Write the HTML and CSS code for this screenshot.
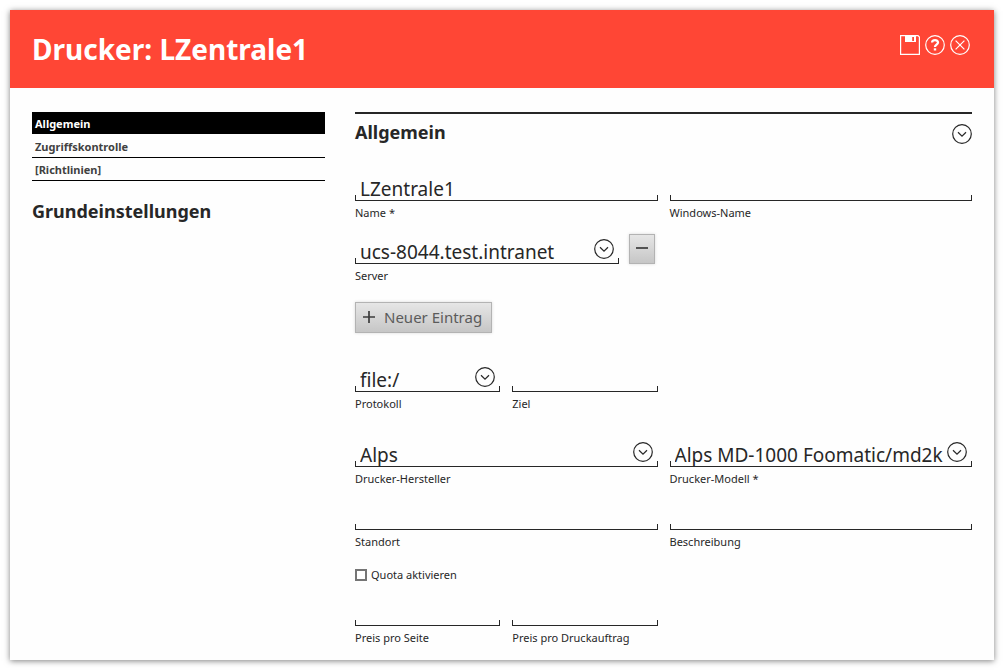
FILE: index.html
```html
<!DOCTYPE html>
<html lang="de">
<head>
<meta charset="utf-8">
<title>Drucker: LZentrale1</title>
<link rel="stylesheet" href="styles.css">
</head>
<body>
<svg class="sprite" aria-hidden="true">
  <symbol id="chevron" viewBox="0 0 20 20"><circle cx="10" cy="10" r="9.3"/><path d="M6 8.2l4 3.9 4-3.9"/></symbol>
</svg>
<div class="window">
  <header class="titlebar">
    <h1 class="title">Drucker: LZentrale1</h1>
    <div class="actions">
      <button class="icon-button" type="button" aria-label="Speichern">
        <svg class="icon" viewBox="0 0 20 20"><path d="M.6.6H18L19.4 2V19.4H.6z"/><path class="solid" fill-rule="evenodd" d="M5 1H16V7H5zM12.2 2V6H14V2z"/></svg>
      </button>
      <button class="icon-button" type="button" aria-label="Hilfe">
        <svg class="icon" viewBox="0 0 20 20"><circle cx="10" cy="10" r="9.3"/><path class="thick" d="M7.1 7.6C7.1 4.4 13 4.3 13 7.5C13 9.6 10 9.7 10 12"/><path class="solid" d="M8.8 13.3h2.4v2.2H8.8z"/></svg>
      </button>
      <button class="icon-button" type="button" aria-label="Schließen">
        <svg class="icon" viewBox="0 0 20 20"><circle cx="10" cy="10" r="9.3"/><path d="M5.6 5.6l8.8 8.8M14.4 5.6l-8.8 8.8"/></svg>
      </button>
    </div>
  </header>
  <div class="content">
    <aside class="sidebar">
      <nav class="tabs">
        <a class="tab active" href="#allgemein">Allgemein</a>
        <a class="tab" href="#zugriff">Zugriffskontrolle</a>
        <a class="tab" href="#richtlinien">[Richtlinien]</a>
      </nav>
      <h2 class="heading">Grundeinstellungen</h2>
    </aside>
    <main class="main" id="allgemein">
      <div class="section-head">
        <h2 class="heading">Allgemein</h2>
        <button class="icon-button" type="button" aria-label="Allgemein einklappen"><svg class="icon"><use href="#chevron"/></svg></button>
      </div>
      <form class="form">
        <div class="row">
          <div class="field half"><input class="control" id="name" type="text" value="LZentrale1"><label class="label" for="name">Name *</label></div>
          <div class="field half"><input class="control" id="winname" type="text"><label class="label" for="winname">Windows-Name</label></div>
        </div>
        <div class="row">
          <div class="server half">
            <div class="field">
              <div class="picker"><select class="control" id="server"><option>ucs-8044.test.intranet</option></select><svg class="icon arrow"><use href="#chevron"/></svg></div>
              <label class="label" for="server">Server</label>
            </div>
            <button class="button remove" type="button" aria-label="Eintrag entfernen"><svg class="glyph" viewBox="0 0 14 14"><path d="M1 7h12"/></svg></button>
          </div>
        </div>
        <div class="add-row">
          <button class="button" type="button"><svg class="glyph" viewBox="0 0 14 14"><path d="M1 7h12M7 1v12"/></svg>Neuer Eintrag</button>
        </div>
        <div class="row spaced">
          <div class="field"><div class="picker"><select class="control" id="protocol"><option>file:/</option></select><svg class="icon arrow"><use href="#chevron"/></svg></div><label class="label" for="protocol">Protokoll</label></div>
          <div class="field"><input class="control" id="target" type="text"><label class="label" for="target">Ziel</label></div>
        </div>
        <div class="row">
          <div class="field half"><div class="picker"><select class="control" id="vendor"><option>Alps</option></select><svg class="icon arrow"><use href="#chevron"/></svg></div><label class="label" for="vendor">Drucker-Hersteller</label></div>
          <div class="field half"><div class="picker"><select class="control" id="model"><option>Alps MD-1000 Foomatic/md2k</option></select><svg class="icon arrow"><use href="#chevron"/></svg></div><label class="label" for="model">Drucker-Modell *</label></div>
        </div>
        <div class="row">
          <div class="field half"><input class="control" id="location" type="text"><label class="label" for="location">Standort</label></div>
          <div class="field half"><input class="control" id="description" type="text"><label class="label" for="description">Beschreibung</label></div>
        </div>
        <div class="check-row"><input class="check" id="quota" type="checkbox"><label class="label" for="quota">Quota aktivieren</label></div>
        <div class="row">
          <div class="field"><input class="control" id="page-price" type="text"><label class="label" for="page-price">Preis pro Seite</label></div>
          <div class="field"><input class="control" id="job-price" type="text"><label class="label" for="job-price">Preis pro Druckauftrag</label></div>
        </div>
      </form>
    </main>
  </div>
</div>
</body>
</html>
```

FILE: styles.css
```css
* { box-sizing: border-box; }
body {
  margin: 0;
  padding: 10px;
  background: #fff;
  color: #272727;
  font-family: "Noto Sans", "Open Sans", sans-serif;
  font-size: 11px;
}
.sprite { display: none; }
.window {
  min-height: calc(100vh - 20px);
  background: #fefefe;
  box-shadow: 0 1px 6px rgba(0, 0, 0, 0.5);
}
.titlebar {
  display: flex;
  justify-content: space-between;
  padding: 18px 24px 18px 22px;
  background: #ff4635;
  color: #fff;
}
.title { margin: 0; font-size: 28px; line-height: 42px; font-weight: 700; }
.actions { display: flex; gap: 5px; padding-top: 7px; }
.icon-button {
  height: 20px;
  padding: 0;
  border: 0;
  background: none;
  color: inherit;
}
.icon {
  display: block;
  width: 20px;
  height: 20px;
  fill: none;
  stroke: currentColor;
  stroke-width: 1.2;
}
.solid { fill: currentColor; stroke: none; }
.thick { stroke-width: 2.3; }
.content {
  display: grid;
  grid-template-columns: 293fr 617fr;
  gap: 30px;
  padding: 24px 22px 14px;
}
.tab {
  display: block;
  padding: 4px 3px 2px;
  border-bottom: 1px solid #000;
  color: #414141;
  font-weight: 700;
  line-height: 16px;
  text-decoration: none;
}
.tab.active { margin-bottom: 1px; padding-bottom: 1px; background: #000; color: #fff; }
.heading { margin: 0; font-size: 18px; line-height: 24px; font-weight: 700; }
.sidebar .heading { margin-top: 18px; }
.section-head {
  display: flex;
  justify-content: space-between;
  align-items: flex-start;
  padding-top: 6px;
  border-top: 2px solid #272727;
}
.section-head .icon-button { margin-top: 4px; }
.form { padding-top: 27px; }
.row {
  display: grid;
  grid-template-columns: repeat(4, minmax(0, 1fr));
  column-gap: 12px;
  margin-bottom: 13px;
}
.row:last-child { margin-bottom: 0; }
.half { grid-column: span 2; }
.spaced { margin-bottom: 25px; }
.control {
  display: block;
  width: 100%;
  height: 30px;
  margin: 0;
  padding: 6px 5px 0;
  appearance: none;
  border: 0;
  border-bottom: 1px solid #272727;
  border-radius: 0;
  background:
    linear-gradient(#272727, #272727) left bottom / 1px 5px no-repeat,
    linear-gradient(#272727, #272727) right bottom / 1px 5px no-repeat;
  color: #272727;
  font: 19px/24px "Noto Sans", "Open Sans", sans-serif;
}
.picker { position: relative; }
.picker .control { padding-right: 26px; }
.arrow { position: absolute; top: 5px; right: 5px; pointer-events: none; }
.label { display: block; line-height: 16px; }
.field .label { margin-top: 4px; }
.server { display: flex; align-items: flex-start; gap: 10px; padding-right: 3px; }
.server .field { flex: 1; }
.button {
  display: flex;
  align-items: center;
  gap: 8px;
  height: 31px;
  padding: 0 9px 2px 6px;
  border: 1px solid #b3b3b3;
  background: linear-gradient(#e6e6e6, #c6c6c6);
  box-shadow: 0 0 3px rgba(0, 0, 0, 0.15);
  color: #5b5b5b;
  font: 15px/20px "Noto Sans", "Open Sans", sans-serif;
}
.remove { height: 30px; padding: 0 5px 2px; }
.glyph { width: 14px; height: 14px; fill: none; stroke: #3c3c3c; stroke-width: 1.7; }
.add-row { margin: 18px 0 29px; }
.check-row { display: flex; align-items: center; gap: 4px; margin: 17px 0 13px; }
.check {
  width: 12px;
  height: 12px;
  margin: 0;
  appearance: none;
  border: 2px solid #757575;
  background: #fff;
}
.check:checked { background: #444; }
```
